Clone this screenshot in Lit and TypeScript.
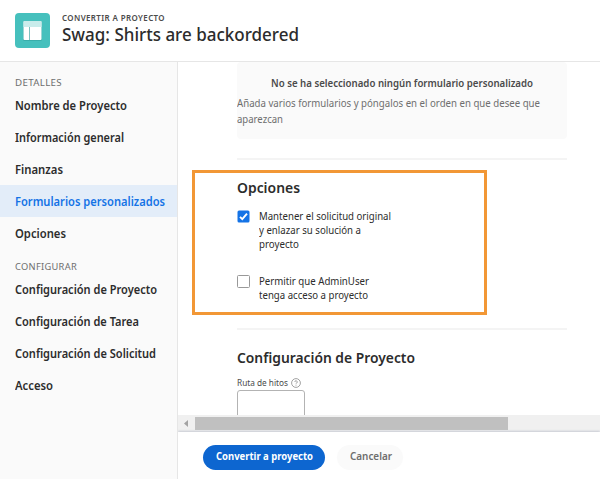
import { LitElement, html, css } from "lit";
import { customElement, property, query, state } from "lit/decorators.js";

/** A single line of text scaled horizontally to fill a given width. */
@customElement("fit-line")
class FitLine extends LitElement {
  static styles = css`
    :host { display: block; white-space: nowrap; }
    .text { display: inline-block; white-space: nowrap; transform-origin: 0 50%; }
  `;
  @property() text = "";
  @property({ type: Number }) w = 0;
  @state() private scale = 1;
  @query(".text") private span!: HTMLElement;

  firstUpdated() {
    const natural = this.span.getBoundingClientRect().width;
    if (this.w && natural) {
      this.scale = this.w / natural;
      this.style.width = `${this.w}px`;
    }
  }
  render() {
    return html`<span class="text" style="transform:scaleX(${this.scale})">${this.text}</span>`;
  }
}

const line = (text: string, w: number) => html`<fit-line .text=${text} .w=${w}></fit-line>`;

const groups = [
  { title: "DETALLES", w: 47, items: [["Nombre de Proyecto", 112], ["Información general", 109], ["Finanzas", 48], ["Formularios personalizados", 150], ["Opciones", 51]] },
  { title: "CONFIGURAR", w: 62, items: [["Configuración de Proyecto", 142], ["Configuración de Tarea", 124], ["Configuración de Solicitud", 141], ["Acceso", 38]] },
] as { title: string; w: number; items: [string, number][] }[];

@customElement("app-root")
class AppRoot extends LitElement {
  static styles = css`
    * { box-sizing: border-box; }
    :host {
      display: flex; flex-direction: column; width: 600px; height: 479px; overflow: hidden;
      background: #fff; color: #2c2c2c;
      font-family: "Noto Sans", "Open Sans", sans-serif;
    }
    header { flex: none; height: 62px; border-bottom: 1px solid #e6e6e6; display: flex; padding: 13px 0 0 15px; gap: 12px; }
    .logo { width: 35px; height: 35px; display: block; }
    .eyebrow { font-size: 8px; line-height: 10px; font-weight: 600; color: #4b4b4b; letter-spacing: .4px; }
    .title { font-size: 18px; line-height: 22px; font-weight: 500; }
    .body { flex: 1; display: flex; min-height: 0; }
    nav { width: 178px; flex: none; background: #fafafa; border-right: 1px solid #e6e6e6; padding-top: 15px; }
    .group { height: 12px; line-height: 12px; font-size: 9px; color: #6e6e6e; padding-left: 15px; letter-spacing: .3px; }
    .item { height: 32px; line-height: 33px; font-size: 12px; font-weight: 600; padding-left: 15px; }
    .item.on { background: #e3edf9; color: #1473e6; }
    .item + .group { margin-top: 12px; }
    .right { flex: 1; min-width: 0; display: flex; flex-direction: column; overflow: hidden; }
    .pane { height: 353px; overflow: hidden; padding-left: 59px; position: relative; }
    .card { width: 330px; height: 77px; background: #fafafa; border-radius: 4px; padding-top: 13px; font-size: 10.5px; line-height: 16px; color: #6e6e6e; }
    .card .head { font-weight: 600; color: #4b4b4b; padding-left: 34px; margin-bottom: 4px; }
    .rule { width: 330px; height: 2px; background: #f4f4f4; margin-top: 19px; }
    .rule.second { margin-top: 26px; }
    h2 { margin: 16px 0 0; font-size: 14px; line-height: 24px; font-weight: 600; }
    .check { display: flex; gap: 9px; margin-top: 9px; font-size: 10.5px; line-height: 14px; color: #2c2c2c; }
    .check.second { margin-top: 23px; }
    .check svg { width: 13px; height: 13px; display: block; flex: none; margin-top: 1px; }
    .field { display: flex; align-items: center; gap: 3px; font-size: 9px; line-height: 12px; height: 12px; margin-top: 7px; color: #4b4b4b; }
    .field svg { width: 10px; height: 10px; display: block; flex: none; }
    .input { width: 68px; height: 34px; margin-top: 1px; border: 1px solid #b3b3b3; border-radius: 3px; background: #fff; }
    .frame { position: absolute; left: 14px; top: 108px; width: 295px; height: 145px; border: 3px solid #f29735; }
    .scroll { height: 17px; flex: none; background: #f0f0f0; display: flex; align-items: flex-start; padding-top: 2px; }
    .arrow { width: 17px; height: 13px; display: block; }
    .thumb { width: 313px; height: 13px; background: #c0c0c0; }
    footer { flex: 1; position: relative; background: #fff; box-shadow: 0 -1px 2px #c8cbd4; display: flex; gap: 12px; padding: 13px 0 0 25px; }
    .btn { height: 25px; border-radius: 13px; font-size: 10.5px; line-height: 23px; font-weight: 600; }
    .primary { width: 122px; padding-left: 13px; background: #0d66d0; color: #fff; font-weight: 700; }
    .quiet { width: 66px; padding-left: 13px; background: #fafafa; color: #6e6e6e; }
  `;

  render() {
    return html`
      <header>
        <svg class="logo" viewBox="0 0 35 35">
          <rect width="35" height="35" rx="4" fill="#46c0bd" />
          <rect x="8" y="8" width="19" height="20" rx="1.5" fill="#329c9b" opacity=".55" />
          <rect x="8.5" y="8" width="18" height="19" rx="1" fill="#fff" />
          <path d="M8.500 9a1 1 0 0 1 1-1h16a1 1 0 0 1 1 1v5h-18z" fill="#c9eceb" />
          <path d="M14.500 14v13" stroke="#6fbab9" stroke-width=".9" />
        </svg>
        <div>
          <div class="eyebrow">${line("CONVERTIR A PROYECTO", 103)}</div>
          <div class="title">${line("Swag: Shirts are backordered", 237)}</div>
        </div>
      </header>
      <div class="body">
        <nav>
          ${groups.map((g) => html`
            <div class="group">${line(g.title, g.w)}</div>
            ${g.items.map(([t, w]) => html`<div class="item ${t.startsWith("Formularios") ? "on" : ""}">${line(t, w)}</div>`)}
          `)}
        </nav>
        <div class="right">
          <div class="pane">
            <div class="card">
              <div class="head">${line("No se ha seleccionado ningún formulario personalizado", 262)}</div>
              ${line("Añada varios formularios y póngalos en el orden en que desee que", 303)}
              ${line("aparezcan", 46)}
            </div>
            <div class="rule"></div>
            <h2>${line("Opciones", 63)}</h2>
            <div class="check">
              <svg viewBox="0 0 13 13"><rect x=".5" y=".5" width="12" height="12" rx="1.5" fill="#1473e6" /><path d="M3 6.800 5.300 9.200 10 3.600" fill="none" stroke="#fff" stroke-width="1.9" /></svg>
              <div>${line("Mantener el solicitud original", 132)}${line("y enlazar su solución a", 102)}${line("proyecto", 40)}</div>
            </div>
            <div class="check second">
              <svg viewBox="0 0 13 13"><rect x=".5" y=".5" width="12" height="12" rx="1" fill="#fff" stroke="#999" /></svg>
              <div>${line("Permitir que AdminUser", 110)}${line("tenga acceso a proyecto", 109)}</div>
            </div>
            <div class="rule second"></div>
            <h2>${line("Configuración de Proyecto", 178)}</h2>
            <div class="field">${line("Ruta de hitos", 51)}
              <svg viewBox="0 0 10 10" fill="none" stroke="#8a8a8a" stroke-width=".8"><circle cx="5" cy="5" r="4.4" /><path d="M3.800 4a1.200 1.200 0 1 1 1.800 1c-.4.3-.6.4-.6.9M5 6.700v.9" /></svg>
            </div>
            <div class="input"></div>
            <div class="frame"></div>
          </div>
          <div class="scroll">
            <svg class="arrow" viewBox="0 0 17 13"><path d="M10 3v7L6 6.500z" fill="#a3a3a3" /></svg>
            <div class="thumb"></div>
          </div>
          <footer>
            <div class="btn primary">${line("Convertir a proyecto", 97)}</div>
            <div class="btn quiet">${line("Cancelar", 42)}</div>
          </footer>
        </div>
      </div>
    `;
  }
}
